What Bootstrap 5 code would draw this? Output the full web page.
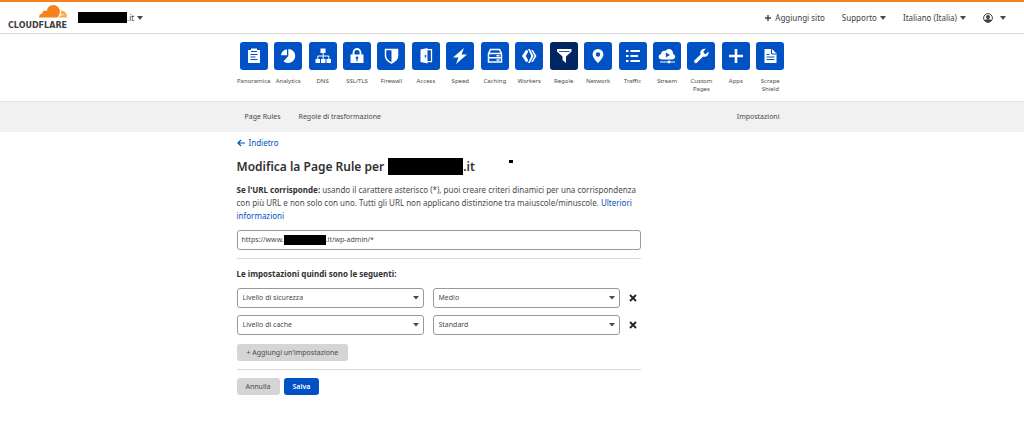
<!DOCTYPE html>
<html lang="it">
<head>
<meta charset="utf-8">
<meta name="viewport" content="width=device-width, initial-scale=1">
<title>Page Rules | Cloudflare</title>
<link href="https://cdn.jsdelivr.net/npm/bootstrap@5.3.0/dist/css/bootstrap.min.css" rel="stylesheet">
<style>
  :root { --cf-blue: #0051c3; --cf-navy: #002664; --cf-orange: #f6821f; --cf-line: #d9d9d9; }
  body { font-family: "Noto Sans", "Open Sans", sans-serif; font-size: 8px; line-height: 13px; color: #4a4a4a; background: #fff; }
  a { color: var(--cf-blue); text-decoration: none; }
  .topbar { border-top: 2px solid var(--cf-orange); border-bottom: 1px solid var(--cf-line); height: 34px; padding: 0 18px 0 8px; }
  .topbar nav { gap: 17px; }
  .topbar a, .topbar button { color: #404041; font-size: 8px; line-height: 13px; }
  .topbar button { gap: 3px; }
  .site-switch { margin-left: 11px; }
  .brand-word { font: bold 8px/8px "DejaVu Sans", sans-serif; color: #404041; }
  .caret { width: 0; height: 0; border: 3px solid transparent; border-top: 4px solid #4a4a4a; border-bottom: 0; }
  .redacted { background: #000; display: inline-block; flex: none; }
  .redacted-site { width: 49px; height: 11px; }
  .redacted-title { width: 75px; height: 17px; margin-left: 4px; }
  .redacted-url { width: 42px; height: 10px; }
  .redacted-dot { width: 4px; height: 3px; margin: 2px 0 0 34px; }
  .page-width { width: 100%; max-width: 551px; margin: 0 auto; }
  .app-nav { display: grid; grid-template-columns: repeat(16, minmax(0, 1fr)); padding: 8px 0 7px; min-height: 67px; }
  .app-nav a { color: #4a4a4a; font-size: 6px; line-height: 8px; text-align: center; white-space: nowrap; }
  .app-tile { width: 28px; height: 28px; border-radius: 3px; background: var(--cf-blue); color: #fff; margin: 0 auto 7px; }
  .active .app-tile { background: var(--cf-navy); }
  .subnav { background: #f1f1f1; border-top: 1px solid #e4e4e4; }
  .subnav .page-width { padding: 8px 8px 9px; font-size: 7px; }
  .subnav-links { gap: 18px; }
  .subnav a { color: #4a4a4a; }
  .rule-form { max-width: 404px; }
  h1 { font-size: 12px; line-height: 17px; font-weight: 600; color: #313131; margin: 0; }
  .field { border: 1px solid #999; border-radius: 3px; height: 20px; font-size: 7px; line-height: 13px; color: #4a4a4a; background-color: #fff; }
  .url-field input { border: 0; padding: 0; outline: 0; color: inherit; min-width: 0; }
  .form-select.field { padding: 0 16px 0 5px; background-size: 6px 4px; background-position: right 4px center;
    background-image: url("data:image/svg+xml,%3Csvg xmlns='http://www.w3.org/2000/svg' viewBox='0 0 6 4'%3E%3Cpath fill='%234a4a4a' d='M0 0h6L3 3.5z'/%3E%3C/svg%3E"); }
  .settings { display: grid; grid-template-columns: minmax(0, 1fr) minmax(0, 1fr) 12px; column-gap: 9px; row-gap: 7px; align-items: center; }
  .rule-line { border-top: 1px solid var(--cf-line); }
  .bold { font-weight: 700; color: #313131; }
  .btn { font-size: 7px; line-height: 13px; border: 0; border-radius: 3px; padding: 2px 9px; }
  .btn-plain, .btn-plain:hover { background: #d5d5d5; color: #4a4a4a; }
  .btn-add { padding: 2px 10px; margin-top: 9px; }
  .btn-save, .btn-save:hover { background: var(--cf-blue); color: #fff; font-weight: 600; }
</style>
</head>
<body>
<header class="topbar d-flex align-items-center justify-content-between">
  <div class="d-flex align-items-center">
    <a href="#" class="d-flex flex-column align-items-end" aria-label="Cloudflare">
      <svg width="28" height="13" viewBox="0 0 56 26" aria-hidden="true">
        <path fill="#f6821f" d="M0 25c0-5 3-8 7-8-1-5 4-8 8-5C17 4 22 0 28 0c7 0 12 4 14 11l-1 7-2 4c-1 2-2 3-4 3z"/>
        <path fill="#fbad41" d="M44 11c7 0 12 6 12 11l-1 3H40l2-4 10-1-9-2z"/>
      </svg>
      <span class="brand-word mt-1">CLOUDFLARE</span>
    </a>
    <button class="btn site-switch p-0 d-flex align-items-center"><span class="d-flex align-items-center"><span class="redacted redacted-site"></span>.it</span><span class="caret"></span></button>
  </div>
  <nav class="d-flex align-items-center">
    <a href="#" class="d-flex align-items-center gap-1"><svg width="6" height="6" viewBox="0 0 6 6" stroke="#404041" stroke-width="1.400" aria-hidden="true"><path d="M3 0v6M0 3h6"/></svg>Aggiungi sito</a>
    <button class="btn p-0 d-flex align-items-center">Supporto<span class="caret"></span></button>
    <button class="btn p-0 d-flex align-items-center">Italiano (Italia)<span class="caret"></span></button>
    <button class="btn p-0 d-flex align-items-center" aria-label="Account">
      <svg width="10" height="10" viewBox="0 0 20 20" aria-hidden="true"><circle cx="10" cy="10" r="8.8" fill="none" stroke="#404041" stroke-width="2"/><circle cx="10" cy="7.8" r="4" fill="#404041"/><path fill="#404041" d="M3 14c2-2 12-2 14 0-3 6-11 6-14 0z"/></svg>
      <span class="caret ms-1"></span></button>
  </nav>
</header>

<nav class="page-width app-nav" aria-label="App">
  <a href="#"><div class="app-tile"><svg width="28" height="28" viewBox="0 0 28 28"><path fill="currentColor" d="M8 8h3V6.500h6V8h3v13H8z"/><path stroke="#0051c3" stroke-width="1.200" d="M11 9.500h6M10.500 12.500h7M10.500 15h5M10.500 17.500h7"/></svg></div>Panoramica</a>
  <a href="#"><div class="app-tile"><svg width="28" height="28" viewBox="0 0 28 28" fill="currentColor"><path d="M14.300 7a7 7 0 1 1-4.800 12.200l4.800-5.200z"/><path d="M13 7.500v5.700H7.200c0-3 2.600-5.700 5.800-5.700z"/></svg></div>Analytics</a>
  <a href="#"><div class="app-tile"><svg width="28" height="28" viewBox="0 0 28 28" fill="currentColor"><path d="M11.500 6.500h5v4.500h-5zM6.500 17h4.500v4H6.500zM12 17h4.500v4H12zM17.500 17H22v4h-4.500z"/><path fill="none" stroke="currentColor" d="M14.200 11v6M8.800 17v-3h11v3"/></svg></div>DNS</a>
  <a href="#"><div class="app-tile"><svg width="28" height="28" viewBox="0 0 28 28"><path fill="currentColor" d="M7.500 12.500h13V21h-13z"/><path fill="none" stroke="currentColor" stroke-width="1.800" d="M10.500 13v-2.500a3.500 3.500 0 0 1 7 0V13"/><circle cx="14" cy="15.800" r="1.300" fill="#0051c3"/><path stroke="#0051c3" stroke-width="1.200" d="M14 16v3"/></svg></div>SSL/TLS</a>
  <a href="#"><div class="app-tile"><svg width="28" height="28" viewBox="0 0 28 28"><path fill="none" stroke="currentColor" stroke-width="1.500" d="M8.500 7.500h12V14c0 3-3 5.500-6 7-3-1.500-6-4-6-7z"/><path fill="currentColor" d="M14.500 7.500h6V14c0 3-3 5.500-6 7z"/></svg></div>Firewall</a>
  <a href="#"><div class="app-tile"><svg width="28" height="28" viewBox="0 0 28 28"><path fill="currentColor" d="M8.500 7.500 15.500 6v15.500L8.500 20z"/><path fill="none" stroke="currentColor" stroke-width="1.300" d="M15 7.700h4.500v12H15"/><path stroke="#0051c3" stroke-width="1.300" d="M13.500 13v2.500"/></svg></div>Access</a>
  <a href="#"><div class="app-tile"><svg width="28" height="28" viewBox="0 0 28 28" fill="currentColor"><path d="M18 6 7 15.500h5.500L10 22l11-9.500h-5.500z"/></svg></div>Speed</a>
  <a href="#"><div class="app-tile"><svg width="28" height="28" viewBox="0 0 28 28" fill="none" stroke="currentColor" stroke-width="1.500"><path d="M7.500 11.500 9.500 7.500h9l2 4v8.500h-13zM7.500 11.500h13M7.500 15.800h13M15.500 13.700h3M15.500 18h3"/></svg></div>Caching</a>
  <a href="#"><div class="app-tile"><svg width="28" height="28" viewBox="0 0 28 28" fill="currentColor"><path d="M11 8h1.300l.8 2-2.400 4 2.400 4-.8 2H11l-4-6z"/><path d="M13 7h1.800l3.800 7-3.800 7H13l3.400-7z"/><path d="M16.200 8h1.600l3.700 6-3.700 6h-1.600l3.400-6z"/></svg></div>Workers</a>
  <a href="#" class="active" aria-current="page"><div class="app-tile"><svg width="28" height="28" viewBox="0 0 28 28"><path fill="currentColor" d="M7 7h14.500v2.500L16 14.500v6.500L12.500 18v-3.500L7 9.500z"/><path stroke="#002664" stroke-width=".8" d="M9 9.500h10.500"/></svg></div>Regole</a>
  <a href="#"><div class="app-tile"><svg width="28" height="28" viewBox="0 0 28 28"><path fill="currentColor" fill-rule="evenodd" d="M14 7a5.400 5.400 0 0 1 5.400 5.400C19.400 16 14 21 14 21s-5.400-5-5.400-8.600A5.400 5.400 0 0 1 14 7zm0 3.300a2.200 2.200 0 1 0 0 4.400 2.200 2.200 0 0 0 0-4.400z"/></svg></div>Network</a>
  <a href="#"><div class="app-tile"><svg width="28" height="28" viewBox="0 0 28 28" fill="none" stroke="currentColor" stroke-width="1.800"><path d="M7 9h2.500M11.500 9H21M7 14h2.500M11.500 14H19M7 19h2.500M11.500 19H21"/></svg></div>Traffic</a>
  <a href="#"><div class="app-tile"><svg width="28" height="28" viewBox="0 0 28 28"><path fill="currentColor" d="M9 17.500c-4.500 0-4-5-1-5.500 0-3 3-4 4.500-3 3-4 8-1 7.500 3 3.500 1 2.500 5.500-1 5.500z"/><path fill="#0051c3" d="m12.800 10.500 4.200 2.500-4.200 2.500z"/><path stroke="currentColor" stroke-width="1" d="M7 20h15"/><circle cx="16" cy="20" r="1.400" fill="currentColor"/></svg></div>Stream</a>
  <a href="#"><div class="app-tile"><svg width="28" height="28" viewBox="0 0 28 28"><path fill="none" stroke="currentColor" stroke-width="3.200" stroke-linecap="round" d="m8.700 19.500 6.500-6.300"/><path fill="currentColor" d="M18.800 6.800 16.500 9.500l.4 2 2 .4 2.600-2.400c.7 3-1.800 5.700-4.700 5.300-2.500-.3-4-2.500-3.500-5 .5-2.200 3-3.700 5.500-3z"/></svg></div>Custom<br>Pages</a>
  <a href="#"><div class="app-tile"><svg width="28" height="28" viewBox="0 0 28 28"><path stroke="currentColor" stroke-width="2.600" d="M14 7v14M7 14h14"/></svg></div>Apps</a>
  <a href="#"><div class="app-tile"><svg width="28" height="28" viewBox="0 0 28 28"><path fill="currentColor" d="M8.500 7h7.500l4.500 4.500V21h-12z"/><path fill="none" stroke="#0051c3" stroke-width="1" d="M15.500 7v5h5M10.500 12.500h3M10.500 15h8M10.500 17.500h8"/></svg></div>Scrape<br>Shield</a>
</nav>

<nav class="subnav" aria-label="Regole">
  <div class="page-width d-flex justify-content-between">
    <div class="subnav-links d-flex"><a href="#">Page Rules</a><a href="#">Regole di trasformazione</a></div>
    <a href="#">Impostazioni</a>
  </div>
</nav>

<main class="page-width">
  <form class="rule-form">
    <div class="pt-1"><a href="#" class="d-inline-flex align-items-center gap-1"><svg width="8" height="8" viewBox="0 0 8 8" fill="none" stroke="currentColor" stroke-width="1.200" aria-hidden="true"><path d="M8 4H1M4 1 1 4l3 3"/></svg>Indietro</a></div>
    <h1 class="d-flex align-items-center mt-2"><span>Modifica la Page Rule per</span><span class="redacted redacted-title"></span><span>.it</span><span class="redacted redacted-dot align-self-start"></span></h1>
    <p class="mt-2 mb-2"><label for="url" class="bold d-inline">Se l'URL corrisponde:</label> usando il carattere asterisco (*), puoi creare criteri dinamici per una corrispondenza con più URL e non solo con uno. Tutti gli URL non applicano distinzione tra maiuscole/minuscole. <a href="#">Ulteriori informazioni</a></p>
    <div class="field url-field d-flex align-items-center ps-1">
      <span>https://www.</span><span class="redacted redacted-url"></span><input id="url" class="flex-grow-1" type="text" value=".it/wp-admin/*">
    </div>
    <div class="rule-line mt-2 pt-2"><div class="bold">Le impostazioni quindi sono le seguenti:</div></div>
    <div class="settings mt-2">
      <select class="form-select field" aria-label="Impostazione 1"><option>Livello di sicurezza</option></select>
      <select class="form-select field" aria-label="Valore 1"><option>Medio</option></select>
      <button type="button" class="btn p-0 d-flex" aria-label="Rimuovi"><svg width="8" height="8" viewBox="0 0 8 8" stroke="#222" stroke-width="1.800"><path d="m1 1 6 6M7 1 1 7"/></svg></button>
      <select class="form-select field" aria-label="Impostazione 2"><option>Livello di cache</option></select>
      <select class="form-select field" aria-label="Valore 2"><option>Standard</option></select>
      <button type="button" class="btn p-0 d-flex" aria-label="Rimuovi"><svg width="8" height="8" viewBox="0 0 8 8" stroke="#222" stroke-width="1.800"><path d="m1 1 6 6M7 1 1 7"/></svg></button>
    </div>
    <button type="button" class="btn btn-plain btn-add">+ Aggiungi un'impostazione</button>
    <div class="rule-line mt-2 pt-2 d-flex gap-1">
      <button type="button" class="btn btn-plain">Annulla</button>
      <button type="submit" class="btn btn-save">Salva</button>
    </div>
  </form>
</main>
<script src="https://cdn.jsdelivr.net/npm/bootstrap@5.3.0/dist/js/bootstrap.bundle.min.js"></script>
</body>
</html>
